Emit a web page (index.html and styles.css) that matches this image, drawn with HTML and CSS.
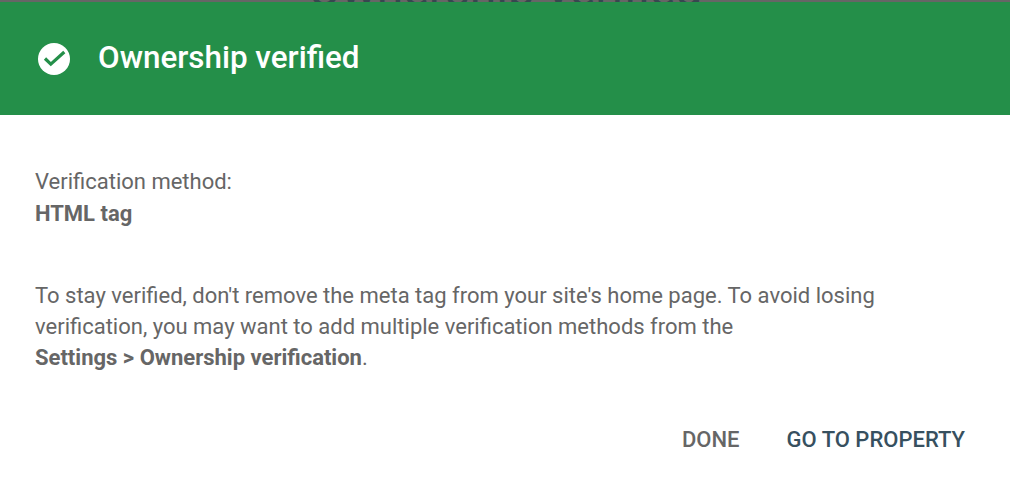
FILE: index.html
```html
<!DOCTYPE html>
<html lang="en">
<head>
    <meta charset="UTF-8">
    <title>Ownership verified</title>
    <link rel="stylesheet" href="styles.css">
</head>
<body>
    <div class="backdrop">
        <div class="backdrop-text">Ownership verified</div>
    </div>
    <div class="dialog">
        <div class="dialog-header">
            <svg class="check-icon" viewBox="0 0 32 32" width="32" height="32">
                <circle cx="16" cy="16" r="16" fill="#fff"/>
                <path d="M7 15.5l5.8 5.6L26.3 9" fill="none" stroke="#248f49" stroke-width="3.2"/>
            </svg>
            <h1>Ownership verified</h1>
        </div>
        <div class="dialog-body">
            <p class="method">Verification method:<br><strong>HTML tag</strong></p>
            <p class="note">To stay verified, don't remove the meta tag from your site's home page. To avoid losing verification, you may want to add multiple verification methods from the<br><strong>Settings &gt; Ownership verification</strong>.</p>
        </div>
        <div class="dialog-actions">
            <button class="btn-done">DONE</button>
            <button class="btn-go">GO TO PROPERTY</button>
        </div>
    </div>
</body>
</html>
```

FILE: styles.css
```css
html, body {
    margin: 0;
    height: 100%;
    overflow: hidden;
}
body {
    background-color: #fff;
    font-family: Roboto, "Liberation Sans", sans-serif;
    color: #666;
}
.backdrop {
    height: 2px;
    background-color: #666;
    overflow: hidden;
    display: flex;
    justify-content: center;
}
.backdrop-text {
    font-size: 48px;
    line-height: 24px;
    margin-top: -22px;
    color: #37474f;
    white-space: nowrap;
}
.dialog-header {
    height: 113px;
    background-color: #248f49;
    display: flex;
    align-items: center;
    padding-left: 38px;
    gap: 28px;
}
.check-icon {
    flex: none;
}
h1 {
    margin: 0 0 2px;
    color: #fff;
    font-size: 31.4px;
    font-weight: 500;
}
.dialog-body {
    padding: 51px 35px 0;
    font-size: 22px;
    line-height: 31px;
}
.dialog-body p {
    margin: 0;
    max-width: 860px;
}
.dialog-body strong {
    font-weight: 700;
}
.dialog-body .method {
    line-height: 32px;
    margin-bottom: 50px;
}
.dialog-actions {
    display: flex;
    justify-content: flex-end;
    gap: 47px;
    padding: 51px 45px 0 0;
}
button {
    border: none;
    background: none;
    padding: 0;
    font-family: inherit;
    font-size: 22px;
    font-weight: 500;
    line-height: 31px;
    cursor: pointer;
}
.btn-done {
    color: #666;
}
.btn-go {
    color: #37505f;
}
```
